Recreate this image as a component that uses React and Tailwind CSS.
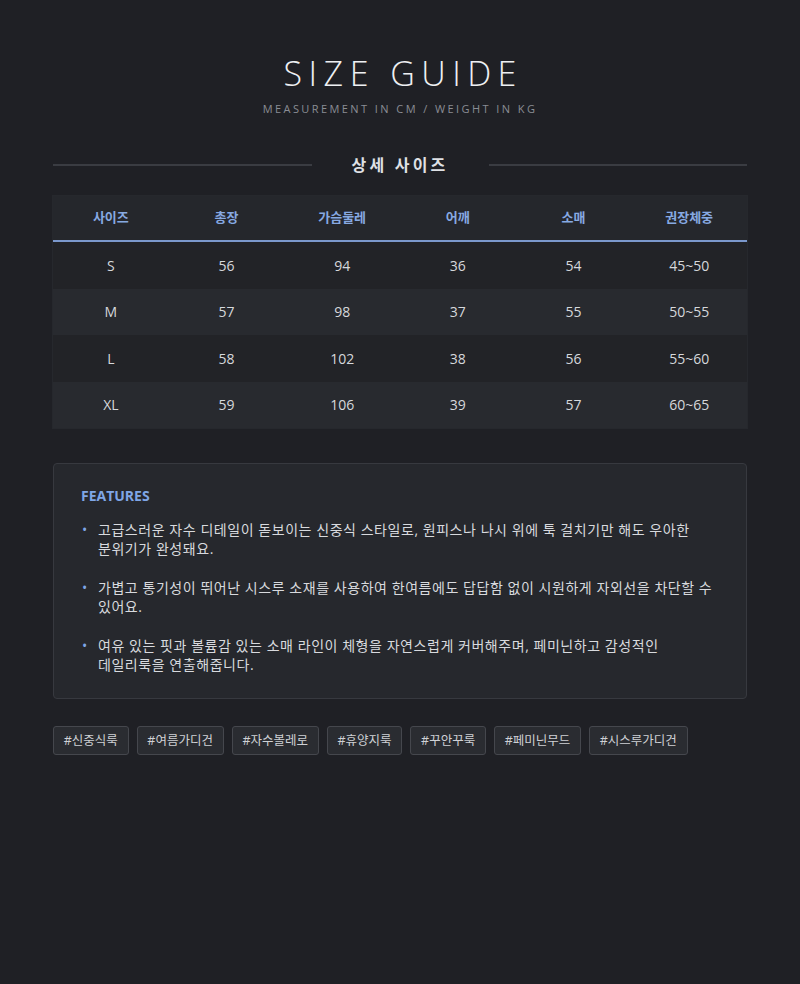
import React from "react";

const rows = [
  ["S", "56", "94", "36", "54", "45~50"],
  ["M", "57", "98", "37", "55", "50~55"],
  ["L", "58", "102", "38", "56", "55~60"],
  ["XL", "59", "106", "39", "57", "60~65"],
];

const headers = ["사이즈", "총장", "가슴둘레", "어깨", "소매", "권장체중"];

const features = [
  "고급스러운 자수 디테일이 돋보이는 신중식 스타일로, 원피스나 나시 위에 툭 걸치기만 해도 우아한 분위기가 완성돼요.",
  "가볍고 통기성이 뛰어난 시스루 소재를 사용하여 한여름에도 답답함 없이 시원하게 자외선을 차단할 수 있어요.",
  "여유 있는 핏과 볼륨감 있는 소매 라인이 체형을 자연스럽게 커버해주며, 페미닌하고 감성적인 데일리룩을 연출해줍니다.",
];

const tags = ["#신중식룩", "#여름가디건", "#자수볼레로", "#휴양지룩", "#꾸안꾸룩", "#페미닌무드", "#시스루가디건"];

export default function App() {
  return (
    <div
      className="min-h-[984px] w-full bg-[#1f2025] text-[#d4d6db]"
      style={{ fontFamily: '"Open Sans", "Noto Sans CJK KR", sans-serif' }}
    >
      <div className="mx-auto w-[694px] pt-[52px]">
        {/* Title */}
        <div className="text-center">
          <h1 className="text-[34px] font-light leading-[42px] tracking-[0.19em] text-[#eef0f3] pl-[0.19em]">
            SIZE GUIDE
          </h1>
          <p className="mt-[8px] text-[11px] leading-[14px] tracking-[0.22em] text-[#8a8d94]">
            MEASUREMENT IN CM / WEIGHT IN KG
          </p>
        </div>

        {/* Section heading */}
        <div className="mt-[39px] flex items-center">
          <div className="h-[2px] flex-1 bg-[#3a3c42]" />
          <h2 className="w-[177px] text-center text-[16px] font-bold leading-[20px] tracking-[0.2em] text-[#dfe1e5]">
            상세 사이즈
          </h2>
          <div className="h-[2px] flex-1 bg-[#3a3c42]" />
        </div>

        {/* Table */}
        <div className="mt-[21px] shadow-[0_0_0_1px_#26282d]">
          <div className="grid grid-cols-6 h-[46px] items-center bg-[#25272c] border-b-2 border-b-[#7b98cc]">
            {headers.map((h) => (
              <div key={h} className="text-center text-[13px] font-bold text-[#87a9e2]">
                {h}
              </div>
            ))}
          </div>
          {rows.map((r, i) => (
            <div
              key={r[0]}
              className={`grid grid-cols-6 h-[46.5px] items-center text-[14px] text-[#d6d8dc] ${
                i % 2 === 0 ? "bg-[#222327]" : "bg-[#282a2f]"
              }`}
            >
              {r.map((c, j) => (
                <div key={j} className="text-center">
                  {c}
                </div>
              ))}
            </div>
          ))}
        </div>

        {/* Features */}
        <div className="mt-[35px] rounded-[4px] border border-[#37393f] bg-[#26282d] px-[27px] pt-[22px] pb-[24px]">
          <h3 className="text-[14px] font-bold leading-[20px] text-[#7fa6e6]">FEATURES</h3>
          <ul className="mt-[14px] flex flex-col gap-[20px]">
            {features.map((f) => (
              <li key={f} className="flex text-[14px] leading-[19px] tracking-[0.55px] text-[#d8dade]">
                <span className="w-[17px] shrink-0 pl-[1px] text-[#7fa6e6]">•</span>
                <span className="break-keep">{f}</span>
              </li>
            ))}
          </ul>
        </div>

        {/* Tags */}
        <div className="mt-[27px] flex flex-wrap gap-[8px]">
          {tags.map((t) => (
            <span
              key={t}
              className="h-[29px] rounded-[3px] border border-[#45474d] bg-[#2a2c31] px-[9.75px] text-[12.5px] leading-[27px] text-[#cfd1d5]"
            >
              {t}
            </span>
          ))}
        </div>
      </div>
    </div>
  );
}
